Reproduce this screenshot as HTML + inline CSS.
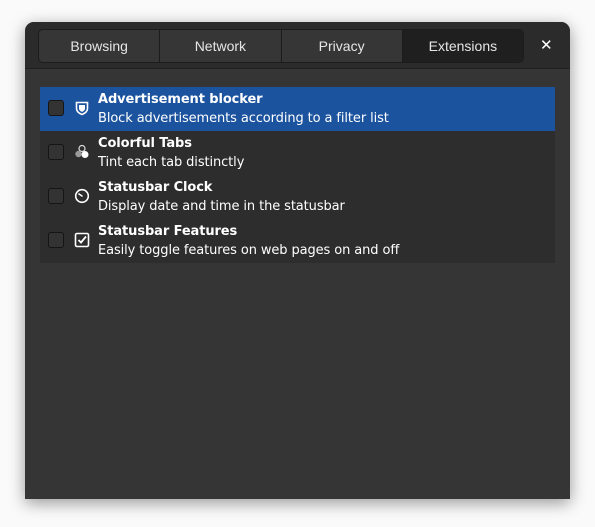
<!DOCTYPE html>
<html><head><meta charset="utf-8"><style>
html,body{margin:0;padding:0;background:#fafafa;width:595px;height:527px;overflow:hidden}
.win{position:absolute;left:25px;top:22px;width:545px;height:477px;background:#353535;border-radius:9px 9px 0 0;box-shadow:0 4px 16px rgba(0,0,0,.4);overflow:hidden}
.hdr{position:absolute;left:0;top:0;width:545px;height:46px;background:#2b2b2b;border-bottom:1px solid #1f1f1f}
.tabs{position:absolute;left:13px;top:7px;width:484px;height:32px;border:1px solid #1c1c1c;border-radius:5px;overflow:hidden;display:flex;background:#363636}
.tab{flex:1;text-align:center;color:#e6e6e6;font:14px "Liberation Sans",sans-serif;line-height:32px;border-right:1px solid #1c1c1c}
.tab:last-child{border-right:none;background:#1f1f1f}
.x{position:absolute;left:515px;top:14px;color:#fff;font:bold 15px "DejaVu Sans",sans-serif}
.list{position:absolute;left:15px;top:65px;width:515px;height:176px;background:#2d2d2d}
.row{position:relative;height:44px}
.row.sel{background:#1b539f}
.cb{position:absolute;left:8px;top:13px;width:14px;height:14px;border:1px solid #151515;border-radius:3px;background:#333}
.ic{position:absolute;left:34px;top:13px}
.t{position:absolute;left:58px;top:5px;color:#fff;font:bold 13px "DejaVu Sans",sans-serif;letter-spacing:-0.1px}
.d{position:absolute;left:58px;top:24px;color:#fff;font:13px "DejaVu Sans",sans-serif;letter-spacing:-0.1px}
</style></head><body>
<div class="win">
<div class="hdr">
<div class="tabs"><div class="tab">Browsing</div><div class="tab">Network</div><div class="tab">Privacy</div><div class="tab">Extensions</div></div>
<div class="x">✕</div>
</div>
<div class="list">
<div class="row sel"><div class="cb"></div>
<svg class="ic" width="16" height="16" viewBox="0 0 16 16"><path d="M2.5 2.5h11v6c0 3-3 5-5.5 6c-2.5-1-5.5-3-5.5-6z" fill="none" stroke="#fff" stroke-width="1.6"/><path d="M5 5h6v3.5c0 1.6-1.6 2.8-3 3.4c-1.4-.6-3-1.8-3-3.4z" fill="#fff"/></svg>
<div class="t">Advertisement blocker</div><div class="d">Block advertisements according to a filter list</div></div>
<div class="row"><div class="cb"></div>
<svg class="ic" width="16" height="16" viewBox="0 0 16 16"><circle cx="8" cy="4.5" r="3" fill="none" stroke="#ddd" stroke-width="1.2"/><circle cx="4.5" cy="10" r="3.2" fill="#999"/><circle cx="11" cy="10.5" r="3.5" fill="#fff"/></svg>
<div class="t">Colorful Tabs</div><div class="d">Tint each tab distinctly</div></div>
<div class="row"><div class="cb"></div>
<svg class="ic" width="16" height="16" viewBox="0 0 16 16"><circle cx="8" cy="8" r="6.3" fill="none" stroke="#fff" stroke-width="1.6"/><path d="M8 8L5 6" stroke="#fff" stroke-width="1.6" stroke-linecap="round"/></svg>
<div class="t">Statusbar Clock</div><div class="d">Display date and time in the statusbar</div></div>
<div class="row"><div class="cb"></div>
<svg class="ic" width="16" height="16" viewBox="0 0 16 16"><rect x="1.5" y="1.5" width="13" height="13" rx="1.5" fill="none" stroke="#fff" stroke-width="1.6"/><path d="M4.5 8l2.5 2.5l5-6" fill="none" stroke="#fff" stroke-width="1.8"/></svg>
<div class="t">Statusbar Features</div><div class="d">Easily toggle features on web pages on and off</div></div>
</div>
</div>
</body></html>
